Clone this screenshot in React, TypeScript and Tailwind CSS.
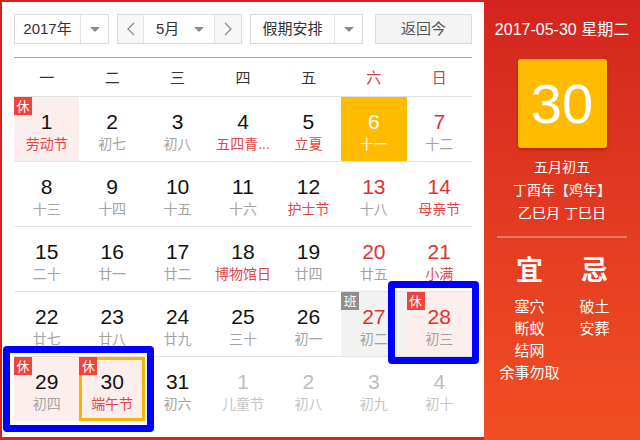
type Day = {
  n: number;
  l: string;
  numRed?: boolean;
  lunarRed?: boolean;
  dim?: boolean;
  rest?: boolean;
  work?: boolean;
  today?: boolean;
  selected?: boolean;
};

const rows: Day[][] = [
  [
    { n: 1, l: '劳动节', lunarRed: true, rest: true },
    { n: 2, l: '初七' },
    { n: 3, l: '初八' },
    { n: 4, l: '五四青...', lunarRed: true },
    { n: 5, l: '立夏', lunarRed: true },
    { n: 6, l: '十一', today: true },
    { n: 7, l: '十二', numRed: true },
  ],
  [
    { n: 8, l: '十三' },
    { n: 9, l: '十四' },
    { n: 10, l: '十五' },
    { n: 11, l: '十六' },
    { n: 12, l: '护士节', lunarRed: true },
    { n: 13, l: '十八', numRed: true },
    { n: 14, l: '母亲节', numRed: true, lunarRed: true },
  ],
  [
    { n: 15, l: '二十' },
    { n: 16, l: '廿一' },
    { n: 17, l: '廿二' },
    { n: 18, l: '博物馆日', lunarRed: true },
    { n: 19, l: '廿四' },
    { n: 20, l: '廿五', numRed: true },
    { n: 21, l: '小满', numRed: true, lunarRed: true },
  ],
  [
    { n: 22, l: '廿七' },
    { n: 23, l: '廿八' },
    { n: 24, l: '廿九' },
    { n: 25, l: '三十' },
    { n: 26, l: '初一' },
    { n: 27, l: '初二', numRed: true, work: true },
    { n: 28, l: '初三', numRed: true, rest: true },
  ],
  [
    { n: 29, l: '初四', rest: true },
    { n: 30, l: '端午节', lunarRed: true, rest: true, selected: true },
    { n: 31, l: '初六' },
    { n: 1, l: '儿童节', dim: true },
    { n: 2, l: '初八', dim: true },
    { n: 3, l: '初九', dim: true },
    { n: 4, l: '初十', dim: true },
  ],
];

const weekdays = ['一', '二', '三', '四', '五', '六', '日'];

function Caret() {
  return (
    <span className="h-0 w-0 border-x-[5px] border-t-[5px] border-x-transparent border-t-[#8a8a8a]" />
  );
}

function Chevron({ dir }: { dir: 'left' | 'right' }) {
  return (
    <svg width="10" height="16" viewBox="0 0 10 16" fill="none" stroke="#8a8a8a" strokeWidth="1.3">
      {dir === 'left' ? <polyline points="8,2 2,8 8,14" /> : <polyline points="2,2 8,8 2,14" />}
    </svg>
  );
}

function Cell({ d }: { d: Day }) {
  let bg = 'bg-white';
  if (d.rest) bg = 'bg-[#fdeeee]';
  if (d.work) bg = 'bg-[#f2f2f2]';
  if (d.today) bg = 'bg-[#ffbb00]';

  let numColor = 'text-[#111]';
  if (d.numRed) numColor = 'text-[#e0312f]';
  if (d.dim) numColor = 'text-[#bdbdbd]';
  if (d.today) numColor = 'text-white';

  let lunarColor = 'text-[#a3a3a3]';
  if (d.lunarRed) lunarColor = 'text-[#e04848]';
  if (d.dim) lunarColor = 'text-[#c4c4c4]';
  if (d.today) lunarColor = 'text-white';

  return (
    <div className={`relative flex h-[64px] flex-col items-center pt-[12px] ${bg}`}>
      {d.selected && (
        <div className="pointer-events-none absolute inset-0 border-[3px] border-[#f7b500]" />
      )}
      {d.rest && (
        <span className="absolute left-0 top-0 flex h-[18px] w-[18px] items-center justify-center bg-[#f2433a] text-[13px] leading-none text-white">
          休
        </span>
      )}
      {d.work && (
        <span className="absolute left-0 top-0 flex h-[18px] w-[18px] items-center justify-center bg-[#8f8f8f] text-[13px] leading-none text-white">
          班
        </span>
      )}
      <span className={`relative text-[21px] leading-[26px] ${numColor}`}>{d.n}</span>
      <span className={`relative whitespace-nowrap text-[14px] leading-[18px] ${lunarColor}`}>{d.l}</span>
    </div>
  );
}

export default function App() {
  return (
    <div
      className="relative flex h-[440px] w-[640px] bg-[#d7221f]"
      style={{ fontFamily: '"Liberation Sans", "Noto Sans CJK SC", sans-serif' }}
    >
      {/* Left: month grid */}
      <div className="mb-[3px] ml-[2px] mt-[2px] w-[482px] bg-white px-3 pt-3">
        <div className="flex h-[30px]">
          <div className="flex w-[95px] border border-[#d9d9d9]">
            <div className="flex flex-1 items-center justify-center text-[15px] text-[#333]">2017年</div>
            <div className="flex w-[28px] items-center justify-center border-l border-[#e3e3e3]">
              <Caret />
            </div>
          </div>
          <div className="ml-2 flex w-[125px] border border-[#d9d9d9]">
            <div className="flex w-[26px] items-center justify-center border-r border-[#e3e3e3] bg-[#f7f7f7]">
              <Chevron dir="left" />
            </div>
            <div className="flex flex-1 items-center justify-between pl-[12px] pr-[10px] text-[15px] text-[#333]">
              <span>5月</span>
              <Caret />
            </div>
            <div className="flex w-[27px] items-center justify-center border-l border-[#e3e3e3] bg-[#f7f7f7]">
              <Chevron dir="right" />
            </div>
          </div>
          <div className="ml-2 flex w-[113px] border border-[#d9d9d9]">
            <div className="flex flex-1 items-center justify-center text-[15px] text-[#333]">假期安排</div>
            <div className="flex w-[28px] items-center justify-center border-l border-[#e3e3e3]">
              <Caret />
            </div>
          </div>
          <div className="ml-3 flex w-[97px] items-center justify-center border border-[#dcdcdc] bg-[#f4f4f4] text-[15px] text-[#555]">
            返回今
          </div>
        </div>

        <div className="mt-[13px] h-px bg-[#e88a8a]" />

        <div className="grid h-[39px] grid-cols-7 border-b border-[#e2e2e2] pt-[3px]">
          {weekdays.map((w, i) => (
            <div
              key={w}
              className={`flex items-center justify-center text-[15px] ${i >= 5 ? 'text-[#d9413c]' : 'text-[#333]'}`}
            >
              {w}
            </div>
          ))}
        </div>

        {rows.map((row, ri) => (
          <div
            key={ri}
            className={`grid grid-cols-7 ${ri < rows.length - 1 ? 'border-b border-[#e2e2e2]' : ''}`}
          >
            {row.map((d, ci) => (
              <Cell key={ci} d={d} />
            ))}
          </div>
        ))}
      </div>

      {/* Right: day detail */}
      <div className="flex flex-1 flex-col items-center bg-linear-to-b from-[#d3241f] to-[#f24e24] pt-[20px] text-white">
        <div className="text-[16px] leading-[20px]">2017-05-30 星期二</div>
        <div className="mt-[19px] flex h-[89px] w-[89px] items-center justify-center rounded-[3px] bg-[#ffbb00] text-[56px] leading-none shadow-[0_2px_3px_rgba(120,0,0,0.35)]">
          30
        </div>
        <div className="mt-[8px] flex flex-col items-center text-[14px] leading-[23px]">
          <div>五月初五</div>
          <div>丁酉年【鸡年】</div>
          <div>乙巳月 丁巳日</div>
        </div>
        <div className="mt-[11px] h-[2px] w-[130px] bg-[#ec7b6e]" />
        <div className="mt-[17px] grid w-[130px] grid-cols-2">
          <div className="flex flex-col items-center">
            <div className="text-[27px] font-bold leading-[32px]">宜</div>
            <div className="mt-[9px] flex flex-col items-center text-[15px] leading-[22px]">
              <div>塞穴</div>
              <div>断蚁</div>
              <div>结网</div>
              <div>余事勿取</div>
            </div>
          </div>
          <div className="flex flex-col items-center">
            <div className="text-[27px] font-bold leading-[32px]">忌</div>
            <div className="mt-[9px] flex flex-col items-center text-[15px] leading-[22px]">
              <div>破土</div>
              <div>安葬</div>
            </div>
          </div>
        </div>
      </div>

      {/* Blue annotation marks */}
      <div className="pointer-events-none absolute left-[3px] top-[346px] h-[86px] w-[151px] rounded-[4px] border-[7px] border-[#0000ff]" />
      <div className="pointer-events-none absolute left-[388px] top-[281px] h-[83px] w-[91px] rounded-[4px] border-[7px] border-[#0000ff]" />
    </div>
  );
}
